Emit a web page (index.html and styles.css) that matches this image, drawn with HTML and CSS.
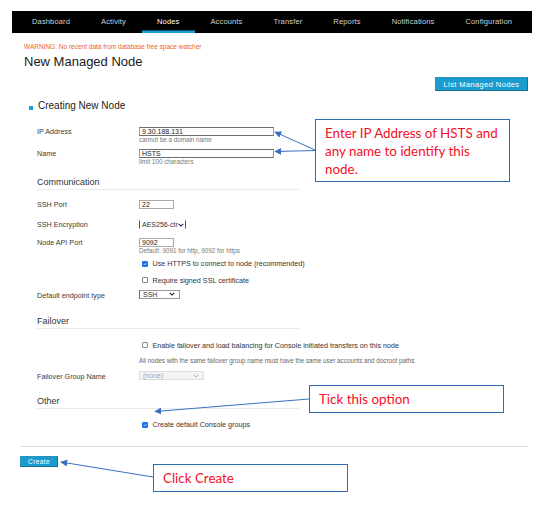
FILE: index.html
```html
<!DOCTYPE html>
<html lang="en">
<head>
<meta charset="utf-8">
<title>New Managed Node</title>
<link rel="stylesheet" href="styles.css">
</head>
<body>
<nav class="nav">
  <a class="nav-item">Dashboard</a>
  <a class="nav-item">Activity</a>
  <a class="nav-item active">Nodes</a>
  <a class="nav-item">Accounts</a>
  <a class="nav-item">Transfer</a>
  <a class="nav-item">Reports</a>
  <a class="nav-item">Notifications</a>
  <a class="nav-item">Configuration</a>
</nav>
<main class="main">
  <p class="warning">WARNING: No recent data from database free space watcher</p>
  <h1 class="page-title">New Managed Node</h1>
  <div class="toolbar"><button class="btn btn-list">List Managed Nodes</button></div>
  <h2 class="form-title"><span class="bullet"></span>Creating New Node</h2>

  <div class="field f-ip">
    <label class="label">IP Address</label>
    <div class="control"><input class="text wide" value="9.30.188.131"><div class="hint">cannot be a domain name</div></div>
  </div>
  <div class="field f-name">
    <label class="label">Name</label>
    <div class="control"><input class="text wide" value="HSTS"><div class="hint">limit 100 characters</div></div>
  </div>

  <h3 class="section s-comm">Communication</h3>
  <div class="field f-sshport">
    <label class="label">SSH Port</label>
    <div class="control"><input class="text short" value="22"></div>
  </div>
  <div class="field f-enc">
    <label class="label">SSH Encryption</label>
    <div class="control"><span class="select sel-enc"><span class="sel-text">AES256-ctr</span><svg class="chev" viewBox="0 0 8 5"><path d="M1 1 L4 4 L7 1" fill="none" stroke="#222" stroke-width="1.4"/></svg></span></div>
  </div>
  <div class="field f-api">
    <label class="label">Node API Port</label>
    <div class="control"><input class="text short" value="9092"><div class="hint">Default: 9091 for http, 9092 for https</div></div>
  </div>
  <div class="field f-https">
    <span class="label"></span>
    <label class="control check"><span class="box checked"><svg viewBox="0 0 6 6"><path d="M1.2 3.1 L2.5 4.4 L4.9 1.6" fill="none" stroke="#fff" stroke-width="1.1"/></svg></span><span>Use HTTPS to connect to node (recommended)</span></label>
  </div>
  <div class="field f-ssl">
    <span class="label"></span>
    <label class="control check"><span class="box"></span><span>Require signed SSL certificate</span></label>
  </div>
  <div class="field f-endpoint">
    <label class="label">Default endpoint type</label>
    <div class="control"><span class="select sel-endpoint"><span class="sel-text">SSH</span><svg class="chev" viewBox="0 0 8 5"><path d="M1 1 L4 4 L7 1" fill="none" stroke="#222" stroke-width="1.4"/></svg></span></div>
  </div>

  <h3 class="section s-fail">Failover</h3>
  <div class="field f-enable">
    <span class="label"></span>
    <label class="control check"><span class="box"></span><span>Enable failover and load balancing for Console initiated transfers on this node</span></label>
  </div>
  <div class="field f-note">
    <span class="label"></span>
    <div class="control note">All nodes with the same failover group name must have the same user accounts and docroot paths</div>
  </div>
  <div class="field f-group">
    <label class="label">Failover Group Name</label>
    <div class="control"><span class="select sel-group"><span class="sel-text">(none)</span><svg class="chev" viewBox="0 0 8 5"><path d="M1 1 L4 4 L7 1" fill="none" stroke="#999" stroke-width="1"/></svg></span></div>
  </div>

  <h3 class="section s-other">Other</h3>
  <div class="field f-groups">
    <span class="label"></span>
    <label class="control check"><span class="box checked"><svg viewBox="0 0 6 6"><path d="M1.2 3.1 L2.5 4.4 L4.9 1.6" fill="none" stroke="#fff" stroke-width="1.1"/></svg></span><span>Create default Console groups</span></label>
  </div>

  <hr class="divider">
  <button class="btn btn-create">Create</button>
</main>

<div class="callout c-enter">Enter IP Address of HSTS and<br>any name to identify this<br>node.</div>
<div class="callout c-tick">Tick this option</div>
<div class="callout c-click">Click Create</div>

<svg class="arrows" width="544" height="524" viewBox="0 0 544 524">
  <defs>
    <marker id="ah" viewBox="0 0 10 10" refX="9" refY="5" markerWidth="7" markerHeight="7" orient="auto-start-reverse" markerUnits="userSpaceOnUse">
      <path d="M0 0 L10 5 L0 10 Z" fill="#3a6fbf"/>
    </marker>
  </defs>
  <g stroke="#3a6fbf" stroke-width="1" fill="none">
    <line x1="315" y1="150" x2="275" y2="132" marker-end="url(#ah)"/>
    <line x1="315" y1="150.5" x2="275" y2="151.5" marker-end="url(#ah)"/>
    <line x1="309" y1="399" x2="155" y2="411.5" marker-end="url(#ah)"/>
    <line x1="153" y1="477" x2="61" y2="462" marker-end="url(#ah)"/>
  </g>
</svg>
</body>
</html>
```

FILE: styles.css
```css
* { box-sizing: border-box; }

html, body { margin: 0; padding: 0; background: #fff; }

body {
  position: relative;
  width: 544px;
  height: 524px;
  overflow: hidden;
  font-family: "Liberation Sans", Arial, sans-serif;
  color: #333;
}

/* ---------- navigation ---------- */
.nav {
  display: flex;
  height: 22px;
  margin: 11px 12px 0;
  padding-left: 4.5px;
  background: #000;
}
.nav-item {
  padding: 0 15.5px;
  font-size: 7.5px;
  line-height: 22px;
  letter-spacing: 0.15px;
  color: #d0d0d0;
  white-space: nowrap;
}
.nav-item.active {
  color: #fff;
  box-shadow: inset 0 -2.5px 0 #1aa0d6;
}

/* ---------- page ---------- */
.main {
  padding: 0 16px 0 20px;
}
.warning {
  margin: 10px 0 0 4px;
  font-size: 6.5px;
  line-height: 8px;
  color: #e8642a;
}
.page-title {
  margin: 3px 0 0 4px;
  font-size: 13px;
  line-height: 15px;
  font-weight: normal;
  color: #1a1a1a;
}
.toolbar {
  display: flex;
  justify-content: flex-end;
  margin-top: 8px;
}
.btn {
  font-family: "Liberation Sans", Arial, sans-serif;
  color: #fff;
  background: #1a9ccf;
  border: 1px solid #1b6d93;
  border-top-color: #2b92c0;
  border-left-color: #2b92c0;
  border-radius: 0;
  cursor: pointer;
}
.btn-list {
  width: 93px;
  height: 14px;
  padding: 0;
  font-size: 7.5px;
  letter-spacing: 0.4px;
}
.form-title {
  display: flex;
  align-items: flex-end;
  gap: 5px;
  margin: 9px 0 0 9px;
  font-size: 10px;
  line-height: 12px;
  font-weight: normal;
  color: #1a1a1a;
}
.bullet {
  width: 4px;
  height: 4px;
  margin-bottom: 2px;
  background: #1a9ccf;
}

/* ---------- form rows ---------- */
.field {
  display: grid;
  grid-template-columns: 102px 1fr;
  align-items: start;
  padding-left: 17px;
  font-size: 7.2px;
}
.label {
  line-height: 9px;
  color: #3a3a3a;
  white-space: nowrap;
}
.control { min-width: 0; }

.text {
  display: block;
  height: 9px;
  padding: 0 2px;
  font-family: "Liberation Sans", Arial, sans-serif;
  font-size: 7px;
  line-height: 7px;
  color: #222;
  background: #fff;
  border: 1px solid #9a9a9a;
  border-top-color: #6d6d6d;
  border-bottom-color: #6d6d6d;
  outline: none;
}
.text.wide { width: 135px; }
.text.short { width: 35px; border-color: #a8a8a8; }

.hint {
  font-size: 6.3px;
  line-height: 7px;
  color: #777;
  white-space: nowrap;
}

.select {
  display: flex;
  align-items: center;
  justify-content: space-between;
  height: 9px;
  padding: 0 2px 0 3px;
  font-size: 7px;
  color: #333;
  background: #fff;
  border: 1px solid #b5b5b5;
  white-space: nowrap;
}
.select .chev { flex: none; width: 6px; height: 4px; }
.sel-enc { width: 47px; padding: 0 1px 0 2px; border-top-color: #fff; border-bottom-color: #fff; border-left-color: #555; border-right-color: #555; }
.sel-endpoint { width: 41px; border-color: #999; border-left-color: #666; padding-right: 4px; }
.sel-group { width: 65px; color: #aaa; background: #f3f3f3; border-color: #ddd; padding-right: 4px; }

.check {
  display: flex;
  align-items: center;
  gap: 4.5px;
  padding-left: 3px;
  line-height: 9px;
  white-space: nowrap;
  color: #333;
}
.box {
  flex: none;
  display: block;
  width: 6px;
  height: 6px;
  background: #fff;
  border: 0.8px solid #8a8a8a;
  border-radius: 1px;
}
.box.checked {
  background: #1a73e8;
  border-color: #1a73e8;
}
.box svg {
  display: block;
  width: 100%;
  height: 100%;
}

.note {
  font-size: 6.3px;
  line-height: 7px;
  color: #666;
  white-space: nowrap;
}

.section {
  width: 263px;
  margin: 0 0 0 17px;
  padding-bottom: 1px;
  font-size: 9px;
  line-height: 11px;
  font-weight: normal;
  color: #333;
  border-bottom: 1px solid #ececec;
}

/* vertical rhythm */
.f-ip { margin-top: 15px; }
.f-name { margin-top: 6px; }
.s-comm { margin-top: 11.5px; }
.f-sshport { margin-top: 10.5px; }
.f-enc { margin-top: 11px; }
.f-api { margin-top: 9px; }
.f-https { margin-top: 5px; }
.f-ssl { margin-top: 7.5px; }
.f-endpoint { margin-top: 5px; }
.s-fail { margin-top: 16px; }
.f-enable { margin-top: 12px; }
.f-note { margin-top: 7.5px; }
.f-group { margin-top: 7px; }
.s-other { margin-top: 14.5px; }
.f-groups { margin-top: 11.5px; }

.f-endpoint .label, .f-group .label { margin-top: 1px; }

.divider {
  margin: 16.5px 0 0;
  height: 1px;
  border: 0;
  background: #dedede;
}
.btn-create {
  display: block;
  width: 38px;
  height: 11.5px;
  margin-top: 9px;
  padding: 0;
  font-size: 6.5px;
  letter-spacing: 0.4px;
}

/* ---------- annotations ---------- */
.callout {
  position: absolute;
  padding-left: 9px;
  font-family: Lato, "Open Sans", sans-serif;
  font-size: 13.4px;
  color: #f50f1e;
  background: #fff;
  border: 1.3px solid #2f6db5;
  white-space: nowrap;
}
.c-enter {
  left: 315px;
  top: 119px;
  width: 195px;
  height: 63px;
  padding-top: 4px;
  line-height: 18px;
}
.c-tick {
  left: 309px;
  top: 385px;
  width: 195px;
  height: 28px;
  line-height: 26px;
}
.c-click {
  left: 153px;
  top: 464px;
  width: 195px;
  height: 28px;
  line-height: 26px;
}
.arrows {
  position: absolute;
  left: 0;
  top: 0;
  pointer-events: none;
}
```
